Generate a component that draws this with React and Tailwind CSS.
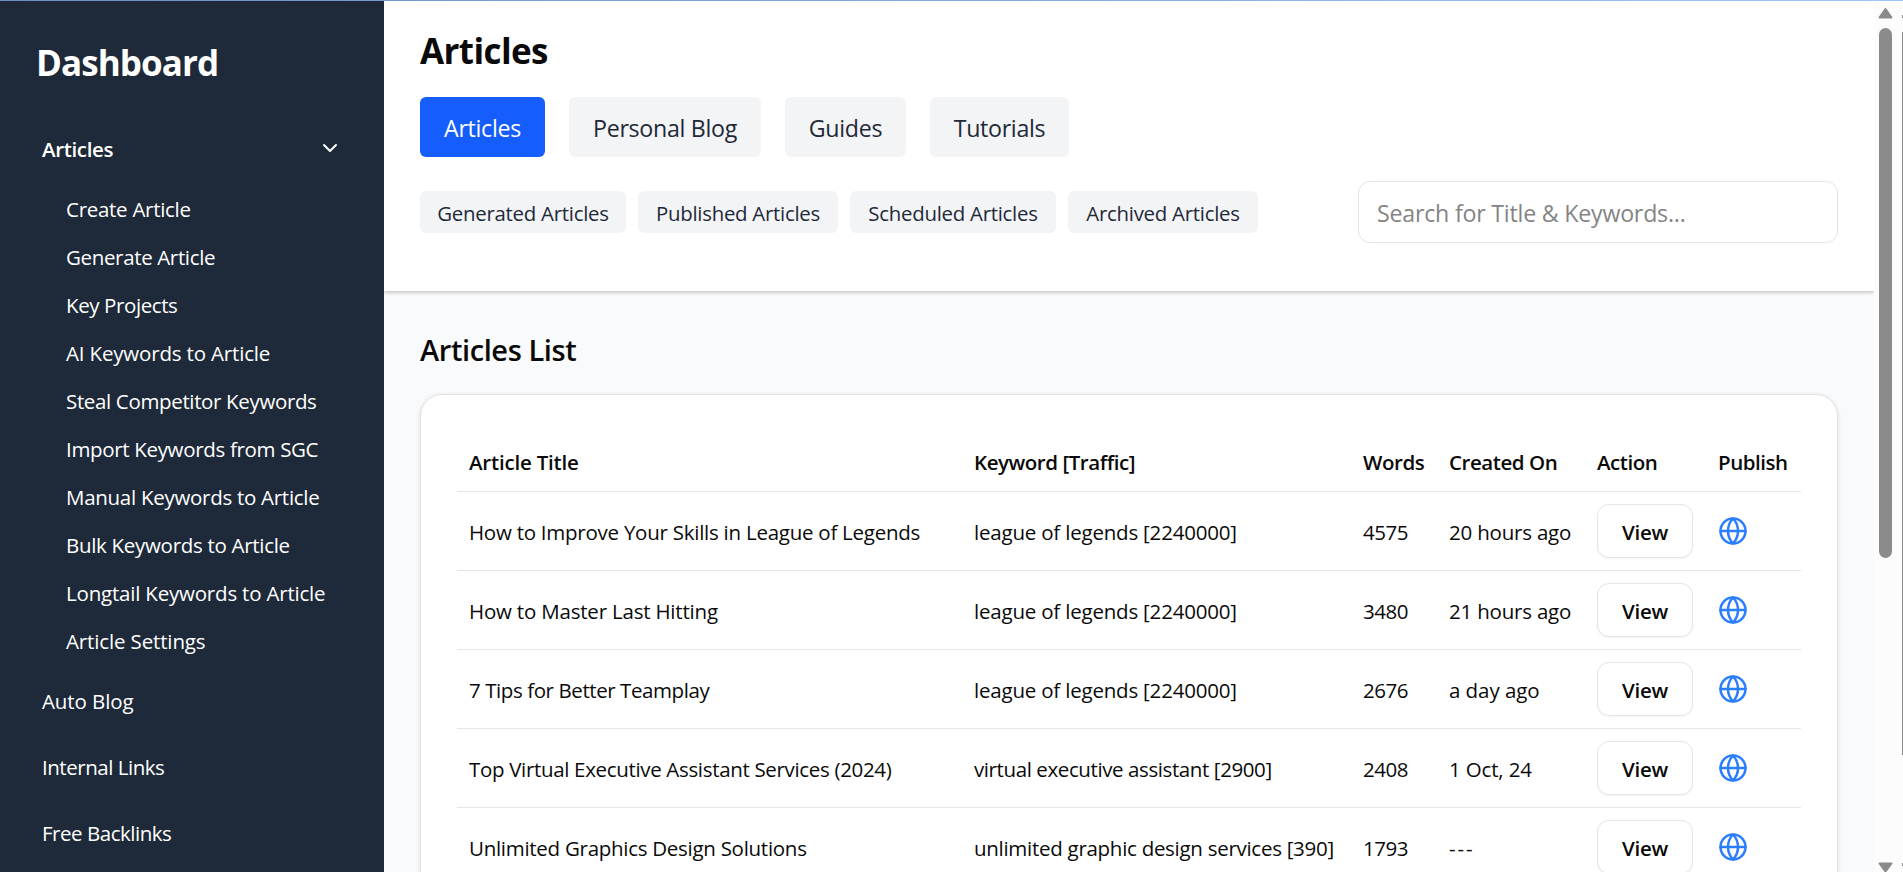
import { ChevronDown, Globe } from "lucide-react";

const subLinks = [
  ["Create Article", "tracking-[-0.28px]"],
  ["Generate Article", "tracking-[-0.35px]"],
  ["Key Projects", "tracking-[-0.4px]"],
  ["AI Keywords to Article", "tracking-[-0.17px]"],
  ["Steal Competitor Keywords", "tracking-[-0.35px]"],
  ["Import Keywords from SGC", "tracking-[-0.33px]"],
  ["Manual Keywords to Article", "tracking-[-0.28px]"],
  ["Bulk Keywords to Article", "tracking-[-0.3px]"],
  ["Longtail Keywords to Article", "tracking-[-0.2px]"],
  ["Article Settings", "tracking-[-0.14px]"],
];

const mainLinks = [
  ["Auto Blog", "tracking-[-0.1px]"],
  ["Internal Links", "tracking-[-0.47px]"],
  ["Free Backlinks", "tracking-[-0.47px]"],
];

const tabs = [
  ["Articles", "w-[125px] bg-[#155dfc] text-white"],
  ["Personal Blog", "w-48 bg-gray-100 text-gray-800"],
  ["Guides", "w-[121px] bg-gray-100 text-gray-800"],
  ["Tutorials", "w-[139px] bg-gray-100 text-gray-800"],
];

const filters = [
  ["Generated Articles", "w-[206px]"],
  ["Published Articles", "w-[200px]"],
  ["Scheduled Articles", "w-[206px]"],
  ["Archived Articles", "w-[190px]"],
];

const rows = [
  { title: "How to Improve Your Skills in League of Legends", titleTracking: "tracking-[-0.25px]", keyword: "league of legends [2240000]", keywordTracking: "tracking-[-0.2px]", words: "4575", created: "20 hours ago", createdTracking: "tracking-[-0.2px]" },
  { title: "How to Master Last Hitting", titleTracking: "tracking-[-0.2px]", keyword: "league of legends [2240000]", keywordTracking: "tracking-[-0.2px]", words: "3480", created: "21 hours ago", createdTracking: "tracking-[-0.2px]" },
  { title: "7 Tips for Better Teamplay", titleTracking: "tracking-[-0.42px]", keyword: "league of legends [2240000]", keywordTracking: "tracking-[-0.2px]", words: "2676", created: "a day ago", createdTracking: "tracking-[-0.05px]" },
  { title: "Top Virtual Executive Assistant Services (2024)", titleTracking: "tracking-[-0.33px]", keyword: "virtual executive assistant [2900]", keywordTracking: "tracking-[-0.4px]", words: "2408", created: "1 Oct, 24", createdTracking: "tracking-[-0.15px]" },
  { title: "Unlimited Graphics Design Solutions", titleTracking: "tracking-[-0.28px]", keyword: "unlimited graphic design services [390]", keywordTracking: "tracking-[-0.28px]", words: "1793", created: "---", createdTracking: "tracking-[1.9px]" },
];

const columns = "grid grid-cols-[505px_389px_86px_148px_121px_1fr] pl-3 whitespace-nowrap";

function Sidebar() {
  return (
    <aside className="flex w-96 shrink-0 flex-col bg-[#1e2939] text-[20.5px] text-white">
      <h2 className="mt-[38px] pl-9 text-[35px] leading-[48px] font-bold tracking-[-0.9px]">Dashboard</h2>
      <div className="mt-[46px] flex h-8 items-center justify-between pr-[42px] pl-[42px]">
        <span className="font-semibold tracking-[-0.35px]">Articles</span>
        <ChevronDown className="-mt-[3px] size-6" strokeWidth={2} />
      </div>
      <ul className="mt-5 pl-[66px]">
        {subLinks.map(([label, tracking]) => (
          <li key={label} className={`flex h-12 items-center whitespace-nowrap ${tracking}`}>{label}</li>
        ))}
      </ul>
      <ul className="mt-[3px] pl-[42px]">
        {mainLinks.map(([label, tracking]) => (
          <li key={label} className={`flex h-[66px] items-center ${tracking}`}>{label}</li>
        ))}
      </ul>
    </aside>
  );
}

function Header() {
  return (
    <header className="z-10 h-[290px] shrink-0 bg-white px-9 shadow-[0_1.5px_4.5px_rgba(0,0,0,0.1),0_1.5px_3px_rgba(0,0,0,0.12)]">
      <h1 className="pt-[26px] text-[35px] leading-[48px] font-bold tracking-[-0.6px] text-[#0a0a0a]">Articles</h1>
      <nav className="mt-[22px] flex gap-6">
        {tabs.map(([label, look]) => (
          <button key={label} className={`h-[60px] rounded-md pt-[3px] text-[23.2px] tracking-[-0.3px] whitespace-nowrap ${look}`}>
            {label}
          </button>
        ))}
      </nav>
      <div className="mt-6 flex items-center justify-between">
        <div className="flex gap-3">
          {filters.map(([label, width]) => (
            <button key={label} className={`h-[42px] rounded-md bg-gray-100 pt-[3px] text-[20.4px] tracking-[-0.26px] whitespace-nowrap text-gray-800 ${width}`}>
              {label}
            </button>
          ))}
        </div>
        <input
          className="h-[62px] w-[480px] rounded-xl border border-[#e5e5e5] px-[18px] pt-0.5 text-[23.2px] tracking-[-0.22px] outline-none placeholder:text-[#848484]"
          placeholder="Search for Title & Keywords..."
        />
      </div>
    </header>
  );
}

function ArticlesTable() {
  return (
    <section className="h-[600px] rounded-[22px] border border-[#e2e4e7] bg-white px-9 pt-9 shadow-[0_1px_4px_rgba(0,0,0,0.12)]">
      <div className={`${columns} h-[61px] items-center border-b border-[#e5e5e5] pt-0.5 text-[20.5px] font-semibold tracking-[-0.45px] text-[#0a0a0a]`}>
        <span className="tracking-[-0.2px]">Article Title</span>
        <span>Keyword [Traffic]</span>
        <span>Words</span>
        <span>Created On</span>
        <span>Action</span>
        <span>Publish</span>
      </div>
      {rows.map((row) => (
        <div key={row.title} className={`${columns} h-[79px] items-center border-b border-[#e5e5e5] text-[20.5px] text-[#0a0a0a]`}>
          <span className={`pt-0.5 ${row.titleTracking}`}>{row.title}</span>
          <span className={`pt-0.5 ${row.keywordTracking}`}>{row.keyword}</span>
          <span className="pt-0.5 tracking-[-0.45px]">{row.words}</span>
          <span className={`pt-0.5 ${row.createdTracking}`}>{row.created}</span>
          <button className="h-[54px] w-24 rounded-xl border border-[#e5e5e5] bg-white pt-0.5 font-semibold tracking-[-0.3px] shadow-xs">View</button>
          <Globe className="size-[30px] text-[#2b7fff]" strokeWidth={2} />
        </div>
      ))}
    </section>
  );
}

function Scrollbar() {
  return (
    <div className="flex w-[29px] shrink-0 justify-between overflow-hidden bg-[#fcfcfc] pl-[3px]">
      <div className="flex w-4 flex-col items-center">
        <svg className="mt-1.5 h-3 w-[15px]" viewBox="0 0 15 12">
          <path d="M7.5 2 13.5 10.5H1.5Z" fill="#8b8b8b" stroke="#8b8b8b" strokeWidth="2" strokeLinejoin="round" />
        </svg>
        <div className="mt-[9px] h-[530px] w-[13px] rounded-full bg-[#8b8b8b]" />
        <svg className="mt-auto h-[11px] w-[15px]" viewBox="0 0 15 11">
          <path d="M7.5 10.5 13.5 2.5H1.5Z" fill="#8b8b8b" stroke="#8b8b8b" strokeWidth="2" strokeLinejoin="round" />
        </svg>
      </div>
      <div className="flex w-px flex-col">
        <div className="mt-[14px] h-[3px] bg-[#8b8b8b]" />
        <div className="mt-[14px] h-[723px] bg-[#8b8b8b]" />
        <div className="mt-auto mb-1.5 h-[3px] bg-[#8b8b8b]" />
      </div>
    </div>
  );
}

export default function App() {
  return (
    <div className="flex h-[872px] w-[1903px] flex-col overflow-hidden bg-gray-50 font-['Open_Sans',sans-serif]">
      <div className="h-px shrink-0 bg-linear-to-r from-[#6d8fc4] to-[#9cc5fb]" />
      <div className="flex min-h-0 flex-1">
        <Sidebar />
        <main className="flex min-w-0 flex-1 flex-col overflow-hidden bg-[#f9fafb]">
          <Header />
          <div className="px-9 pt-9">
            <h2 className="mb-[22px] text-[29px] leading-[45px] font-semibold tracking-[-0.4px] text-[#0a0a0a]">Articles List</h2>
            <ArticlesTable />
          </div>
        </main>
        <Scrollbar />
      </div>
    </div>
  );
}
